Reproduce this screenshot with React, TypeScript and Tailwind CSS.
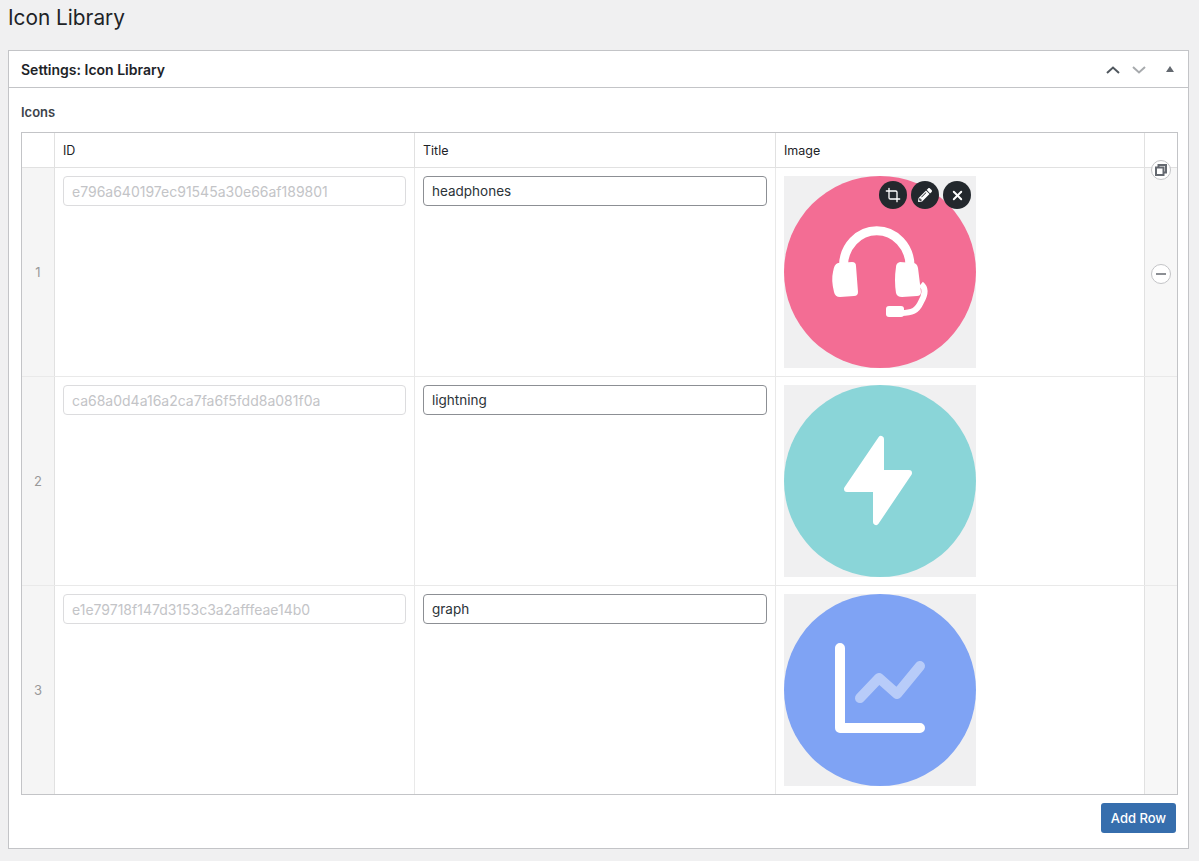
import type { ReactNode } from 'react';
import { Crop, X } from 'lucide-react';
import { FaPencilAlt } from 'react-icons/fa';

function Headphones() {
  return (
    <svg viewBox="0 0 192 192" className="h-48 w-48 rounded-full bg-[#f36d94]">
      <path d="M59.5 90A33 35 0 0 1 126 90" fill="none" stroke="#fff" strokeWidth="9" />
      <path
        d="M54 87L68 86Q72 86 72 90L74 116Q74 120 70 120L56 121Q51 121 50 116Q47 104 49 96Q50 88 54 87Z"
        fill="#fff"
      />
      <path
        d="M116 86L129 87Q133 87 134 92L137 116Q137 120 133 120L118 121Q113 121 112 117Q110 104 112 91Q112 87 116 86Z"
        fill="#fff"
      />
      <path d="M137 108C142 112 141 119 137 126C133 135 128 137 117 137" fill="none" stroke="#fff" strokeWidth="6" />
      <rect x="102" y="130" width="18" height="11" rx="3" fill="#fff" />
    </svg>
  );
}

function Lightning() {
  return (
    <svg viewBox="0 0 192 192" className="h-48 w-48 rounded-full bg-[#8ad5d8]">
      <path
        d="M97 54V88H125L92 137V104H63Z"
        fill="#fff"
        stroke="#fff"
        strokeWidth="6"
        strokeLinejoin="round"
      />
    </svg>
  );
}

function Graph() {
  return (
    <svg viewBox="0 0 192 192" className="h-48 w-48 rounded-full bg-[#7fa3f4]">
      <path
        d="M76 104L95 84L113 100L136 72"
        fill="none"
        stroke="#fff"
        strokeOpacity="0.45"
        strokeWidth="10"
        strokeLinecap="round"
        strokeLinejoin="round"
      />
      <path
        d="M56 54V134H136"
        fill="none"
        stroke="#fff"
        strokeWidth="10"
        strokeLinecap="round"
        strokeLinejoin="round"
      />
    </svg>
  );
}

function RoundAction({ children }: { children: ReactNode }) {
  return (
    <span className="flex h-7 w-7 items-center justify-center rounded-full bg-[#23282d] text-white">
      {children}
    </span>
  );
}

const rows = [
  { id: 'e796a640197ec91545a30e66af189801', title: 'headphones', icon: <Headphones />, active: true },
  { id: 'ca68a0d4a16a2ca7fa6f5fdd8a081f0a', title: 'lightning', icon: <Lightning />, active: false },
  { id: 'e1e79718f147d3153c3a2afffeae14b0', title: 'graph', icon: <Graph />, active: false },
];

export default function App() {
  return (
    <div className="h-[861px] overflow-hidden bg-[#f0f0f1] pt-[5px] pr-[10px] pl-2 font-['Inter',sans-serif] text-[#1d2327]">
      <h1 className="h-[45px] text-[20.8px] leading-[25px] font-normal">Icon Library</h1>

      {/* Settings panel */}
      <section className="h-[799px] border border-[#c3c4c7] bg-white">
        <header className="flex h-[37px] items-center border-b border-[#c3c4c7] pt-px pr-[14px] pl-3">
          <h2 className="flex-1 text-sm font-semibold">Settings: Icon Library</h2>
          <svg viewBox="0 0 14 8" className="h-2 w-[14px]">
            <path d="M1 7L7 1.5L13 7" fill="none" stroke="#50575e" strokeWidth="2" />
          </svg>
          <svg viewBox="0 0 14 8" className="ml-3 h-2 w-[14px]">
            <path d="M1 1L7 6.5L13 1" fill="none" stroke="#a7aaad" strokeWidth="2" />
          </svg>
          <svg viewBox="0 0 8 6" className="mb-0.5 ml-5 h-1.5 w-2">
            <path d="M4 0L8 6H0Z" fill="#646970" />
          </svg>
        </header>

        <div className="pt-[17px] pr-[10px] pl-3">
          <div className="mb-[13px] text-[13px] leading-[14px] font-semibold text-[#3c434a]">Icons</div>

          <div className="border border-[#c3c4c7]">
            <div className="flex h-[35px] border-b border-[#e1e1e1] text-[12.5px] leading-[35px]">
              <div className="w-[33px] border-r border-[#e1e1e1]" />
              <div className="w-[360px] border-r border-[#e1e1e1] pl-2">ID</div>
              <div className="w-[361px] border-r border-[#e1e1e1] pl-2">Title</div>
              <div className="w-[369px] border-r border-[#e1e1e1] pl-2">Image</div>
              <div className="flex-1" />
            </div>

            {rows.map((row, i) => (
              <div key={row.id} className={i < 2 ? 'flex h-[209px] border-b border-[#e9e9e9]' : 'flex h-[208px]'}>
                <div className="flex w-[33px] items-center justify-center border-r border-[#e1e1e1] bg-[#f5f5f5] pt-0.5 text-[13px] text-[#999999]">
                  {i + 1}
                </div>
                <div className="w-[360px] border-r border-[#e9e9e9] px-2 pt-2">
                  <input
                    disabled
                    value={row.id}
                    readOnly
                    className="h-[30px] w-full rounded border border-[#dcdcde] bg-white px-2 text-sm text-[#c3c4c7]"
                  />
                </div>
                <div className="w-[361px] border-r border-[#e9e9e9] px-2 pt-2">
                  <input
                    value={row.title}
                    readOnly
                    className="h-[30px] w-full rounded border border-[#8c8f94] bg-white px-2 text-[13.5px] text-[#2c3338]"
                  />
                </div>
                <div className="w-[369px] border-r border-[#e1e1e1] px-2 pt-2">
                  <div className="relative h-48 w-48 bg-[#f0f0f1]">
                    {row.icon}
                    {row.active && (
                      <div className="absolute top-[5px] right-[5px] flex gap-1">
                        <RoundAction>
                          <Crop size={16} strokeWidth={2} />
                        </RoundAction>
                        <RoundAction>
                          <FaPencilAlt size={14} />
                        </RoundAction>
                        <RoundAction>
                          <X size={15} strokeWidth={3} />
                        </RoundAction>
                      </div>
                    )}
                  </div>
                </div>
                <div className="relative flex-1 bg-[#f7f7f7]">
                  {row.active && (
                    <>
                      <span className="absolute top-[-8px] left-[6px] flex h-5 w-5 items-center justify-center rounded-full border border-[#c3c4c7] bg-white">
                        <svg viewBox="0 0 12 12" className="h-3 w-3" fill="none" stroke="#646970" strokeWidth="2">
                          <rect x="1" y="3.5" width="7.5" height="7.5" />
                          <path d="M3.5 3.5V1H11V8.5H8.5" />
                        </svg>
                      </span>
                      <span className="absolute top-[96px] left-[6px] flex h-5 w-5 items-center justify-center rounded-full border border-[#c3c4c7] bg-white">
                        <span className="h-0.5 w-2.5 bg-[#8c8f94]" />
                      </span>
                    </>
                  )}
                </div>
              </div>
            ))}
          </div>

          <div className="mt-2 flex justify-end pr-0.5">
            <button className="h-[30px] w-[75px] rounded-[3px] bg-[#366ead] pt-px text-[13px] font-medium text-white">
              Add Row
            </button>
          </div>
        </div>
      </section>
    </div>
  );
}
